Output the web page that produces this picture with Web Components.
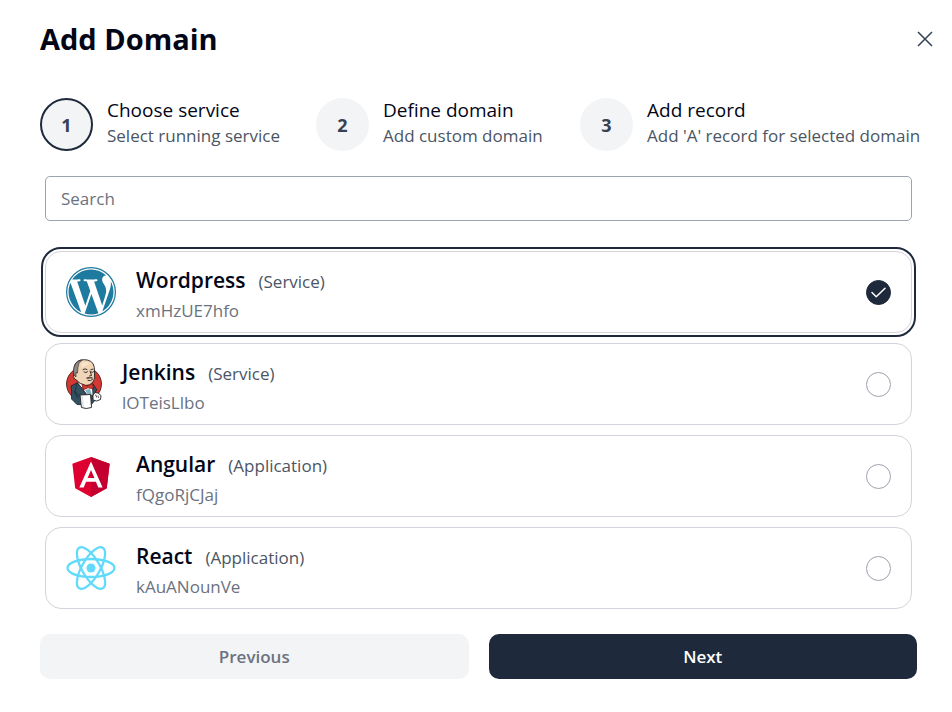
<!DOCTYPE html>
<html lang="en">
<head>
<meta charset="utf-8">
<title>Add Domain</title>
<style>
  body {
    margin: 0;
    background: #fff;
    color: #020617;
    font-family: "Open Sans", "Noto Sans", sans-serif;
    font-size: 17px;
    line-height: 24px;
  }
  svg { display: block; }
</style>
</head>
<body>
<domain-dialog heading="Add Domain">
  <step-list slot="steps">
    <step-item number="1" active><span>Choose service</span><span slot="hint">Select running service</span></step-item>
    <step-item number="2"><span>Define domain</span><span slot="hint">Add custom domain</span></step-item>
    <step-item number="3"><span>Add record</span><span slot="hint">Add 'A' record for selected domain</span></step-item>
  </step-list>
  <search-field placeholder="Search"></search-field>
  <service-list>
    <service-card checked kind="Service" code="xmHzUE7hfo">Wordpress
      <svg slot="logo" width="50" height="50" viewBox="0 0 24 24" aria-hidden="true">
        <circle cx="12" cy="12" r="11.7" fill="#fff" stroke="#1f7a9f" stroke-width=".6"/>
        <path fill="#1f7a9f" d="M21.469 6.825c.84 1.537 1.318 3.3 1.318 5.175 0 3.979-2.156 7.456-5.363 9.325l3.295-9.527c.615-1.54.82-2.771.82-3.864 0-.405-.026-.78-.07-1.11m-7.981.105c.647-.03 1.232-.105 1.232-.105.582-.075.514-.93-.067-.899 0 0-1.755.135-2.88.135-1.064 0-2.85-.15-2.85-.15-.585-.03-.661.855-.075.885 0 0 .54.061 1.125.09l1.68 4.605-2.37 7.08L5.354 6.9c.649-.03 1.234-.1 1.234-.1.585-.075.516-.93-.065-.896 0 0-1.746.138-2.874.138-.2 0-.438-.008-.69-.015C4.911 3.15 8.235 1.215 12 1.215c2.809 0 5.365 1.072 7.286 2.833-.046-.003-.091-.009-.141-.009-1.06 0-1.812.923-1.812 1.914 0 .89.513 1.643 1.06 2.531.411.72.89 1.643.89 2.977 0 .915-.354 1.994-.821 3.479l-1.075 3.585-3.9-11.61zM12 22.784c-1.059 0-2.081-.153-3.048-.437l3.237-9.406 3.315 9.087c.024.053.05.101.078.149-1.12.393-2.325.607-3.582.607M1.211 12c0-1.564.336-3.05.935-4.39L7.29 21.709C3.694 19.96 1.212 16.271 1.211 12"/>
      </svg>
    </service-card>
    <service-card kind="Service" code="lOTeisLlbo">Jenkins
      <svg slot="logo" width="36" height="50" viewBox="0 0 36 50" aria-hidden="true">
        <ellipse cx="18" cy="25" rx="17.5" ry="17" fill="#d33833" stroke="#3a1512" stroke-width=".8"/>
        <path fill="#335061" stroke="#16232c" stroke-width=".8" d="M11 24 5 27Q6 32 5.500 40L11 45.500 25 46 30 40 29 33 31 31 27 25 19 27z"/>
        <path fill="#f0d6b7" stroke="#231f20" stroke-width=".9" d="M8 10Q8 3 14.500 1 23 -.5 27 4.500 29 8 28.500 14 29.500 20 27 23 24 27 19 26.500 13 25 10.500 21L8.500 20Q6.500 17 8 15z"/>
        <path fill="#8f8a85" stroke="#231f20" stroke-width=".6" d="M8 16Q6.500 11 8.500 7 11 1.500 16 1.200 12 4 12 8L11.500 14 10 13.500 10 18z"/>
        <path fill="#f7e4cd" d="M15 4.500Q20 1.500 24 4.500 20 5.500 16 9z"/>
        <path fill="none" stroke="#231f20" stroke-width=".9" stroke-linecap="round" d="M17 10.500Q19 9 21 10.500M25 10.500 27 10.200M18 13Q20 14.500 21.500 12.800M25 13Q26.500 14 27.500 12.800M24 12 25.500 16.500 23.500 17M22 21.500Q24.500 22.500 26.500 20.500"/>
        <path fill="#53463f" d="M20 19Q22 17.300 24 18.200 26.500 17.300 27.500 19.500 24 19.500 23.500 19.500 21.500 20.500 20 19z"/>
        <path fill="#fff" stroke="#231f20" stroke-width=".6" d="M11 23 18 26 24 28 26 26 27 36 22 37z"/>
        <path fill="#81b0c4" d="M19 31 24 30 26 36 22 36z"/>
        <path fill="#335061" stroke="#16232c" stroke-width=".6" d="M11 24 16 29 21 37 14 37 9 33z"/>
        <path fill="#d33833" stroke="#6b1513" stroke-width=".7" d="M16 25 21 27 26.500 24.500 27.500 30 22 28.800 17 31z"/>
        <path fill="none" stroke="#16232c" stroke-width=".8" d="M8 32 12 39"/>
        <path fill="#fff" stroke="#231f20" stroke-width=".9" d="M14 36 24.500 35.500 25.500 48.500Q20 50.500 15.500 48.500z"/>
        <path fill="#dfe5e8" d="M15 37 17 37 18 48 16 48z"/>
        <path fill="#fff" stroke="#231f20" stroke-width=".9" d="M27 36 29 33.500 32 34 35 36.500 34.500 40.500 30.500 42 27 41z"/>
        <path fill="none" stroke="#231f20" stroke-width=".7" d="M29 36Q31 36 30.500 38.500M32 36.500 32.500 39"/>
      </svg>
    </service-card>
    <service-card kind="Application" code="fQgoRjCJaj">Angular
      <svg slot="logo" width="50" height="50" viewBox="0 0 250 250" aria-hidden="true">
        <path fill="#dd0031" d="M125 30 31.900 63.200 46.100 186.300 125 230 203.900 186.300 218.100 63.200z"/>
        <path fill="#c3002f" d="M125 30V230L203.900 186.300 218.100 63.200z"/>
        <path fill="#fff" d="M125 52.100 66.800 182.600H88.500L100.200 153.400H149.600L161.300 182.600H183zM142 135.400H108L125 94.500z"/>
      </svg>
    </service-card>
    <service-card kind="Application" code="kAuANounVe">React
      <svg slot="logo" width="50" height="50" viewBox="0 0 50 50" aria-hidden="true">
        <circle cx="25" cy="25" r="4.500" fill="#61dafb"/>
        <g fill="none" stroke="#61dafb" stroke-width="2.300">
          <ellipse cx="25" cy="25" rx="23.500" ry="9"/>
          <ellipse cx="25" cy="25" rx="23.500" ry="9" transform="rotate(60 25 25)"/>
          <ellipse cx="25" cy="25" rx="23.500" ry="9" transform="rotate(120 25 25)"/>
        </g>
      </svg>
    </service-card>
  </service-list>
  <action-button slot="actions" disabled>Previous</action-button>
  <action-button slot="actions">Next</action-button>
</domain-dialog>

<script>
class BaseElement extends HTMLElement {
  constructor() {
    super();
    this.attachShadow({ mode: 'open' });
  }
  connectedCallback() {
    if (!this.shadowRoot.firstChild) {
      this.shadowRoot.innerHTML = '<style>*{box-sizing:border-box}</style>' + this.render();
      this.ready();
    }
  }
  ready() {}
}

customElements.define('domain-dialog', class extends BaseElement {
  render() {
    return `<style>
      :host { display: block; padding: 19px 35px 32px 40px; }
      header { display: flex; justify-content: space-between; align-items: center; margin: 0 -21px 38px 0; }
      h1 { margin: 0; font-size: 29px; line-height: 40px; font-weight: 700; }
      .close { display: grid; place-items: center; width: 26px; height: 36px; padding: 0; border: 0; background: none; color: #334155; cursor: pointer; }
      main { display: flex; flex-direction: column; gap: 25px; padding: 0 5px; }
      main ::slotted(search-field) { margin-bottom: 5px; }
      .steps { margin-bottom: 24px; }
      footer { display: grid; grid-template-columns: 1fr 1fr; gap: 20px; margin-top: 25px; }
    </style>
    <section role="dialog" aria-labelledby="t">
      <header><h1 id="t">${this.getAttribute('heading')}</h1>
        <button class="close" type="button" aria-label="Close"><svg width="16" height="16" viewBox="0 0 16 16" fill="none" stroke="currentColor" stroke-width="1.500"><path d="M1 1 15 15M15 1 1 15"/></svg></button>
      </header>
      <div class="steps"><slot name="steps"></slot></div>
      <main><slot></slot></main>
      <footer><slot name="actions"></slot></footer>
    </section>`;
  }
});

customElements.define('step-list', class extends BaseElement {
  render() {
    return `<style>
      :host { display: grid; grid-template-columns: minmax(0, 236fr) minmax(0, 224fr) minmax(0, 337fr); gap: 40px; }
    </style><slot></slot>`;
  }
});

customElements.define('step-item', class extends BaseElement {
  render() {
    return `<style>
      :host { display: flex; align-items: center; gap: 14px; white-space: nowrap; }
      .num { flex: none; display: grid; place-items: center; width: 53px; height: 53px; border-radius: 50%; background: #f3f4f6; color: #374151; font-weight: 700; font-size: 18px; border: 2px solid #f3f4f6; }
      :host([active]) .num { border-color: #1e293b; }
      .text { padding-bottom: 4px; }
      .label { font-size: 19px; line-height: 26px; }
      .hint { color: #4b5563; font-size: 17px; line-height: 25px; }
    </style>
    <div class="num">${this.getAttribute('number')}</div>
    <div class="text"><div class="label"><slot></slot></div><div class="hint"><slot name="hint"></slot></div></div>`;
  }
});

customElements.define('search-field', class extends BaseElement {
  render() {
    const p = this.getAttribute('placeholder');
    return `<style>
      :host { display: block; }
      input { display: block; width: 100%; height: 45px; padding: 0 15px; border: 1px solid #9ca3af; border-radius: 5px; background: #fff; color: inherit; font: inherit; }
      input::placeholder { color: #6b7280; opacity: 1; }
    </style><input type="search" aria-label="${p}" placeholder="${p}">`;
  }
});

customElements.define('service-list', class extends BaseElement {
  render() {
    return `<style>:host { display: flex; flex-direction: column; gap: 10px; }</style><slot></slot>`;
  }
  ready() {
    this.setAttribute('role', 'radiogroup');
    this.addEventListener('pick', e => {
      for (const card of this.querySelectorAll('service-card')) {
        card.toggleAttribute('checked', card === e.target);
        card.shadowRoot.querySelector('input').checked = card === e.target;
      }
    });
  }
});

customElements.define('service-card', class extends BaseElement {
  render() {
    return `<style>
      :host { display: block; border: 1px solid #d1d5db; border-radius: 16px; }
      :host([checked]) { outline: 2px solid #1e293b; outline-offset: 2px; }
      label { display: flex; align-items: center; gap: 20px; height: 80px; padding: 0 20px; cursor: pointer; }
      .text { flex: 1; min-width: 0; padding-top: 6px; }
      .top { display: flex; align-items: baseline; gap: 13px; line-height: 30px; }
      .name { font-size: 21px; font-weight: 600; }
      .kind { color: #4b5563; }
      .code { color: #6b7280; line-height: 28px; }
      .pick { display: grid; place-items: center; }
      .pick > * { grid-area: 1 / 1; }
      input { appearance: none; width: 25px; height: 25px; margin: 0; border: 1px solid #9ca3af; border-radius: 50%; background: #fff; }
      input:checked { border-color: #1e293b; background: #1e293b; }
      .tick { display: none; pointer-events: none; }
      input:checked + .tick { display: block; }
    </style>
    <label>
      <slot name="logo"></slot>
      <div class="text">
        <div class="top"><span class="name"><slot></slot></span><span class="kind">(${this.getAttribute('kind')})</span></div>
        <div class="code">${this.getAttribute('code')}</div>
      </div>
      <span class="pick">
        <input type="radio" ${this.hasAttribute('checked') ? 'checked' : ''}>
        <svg class="tick" width="15" height="11" viewBox="0 0 15 11" fill="none" stroke="#fff" stroke-width="1.500" stroke-linecap="round" stroke-linejoin="round"><path d="M1 5.500 5.200 9.700 14 1.200"/></svg>
      </span>
    </label>`;
  }
  ready() {
    this.shadowRoot.querySelector('input').addEventListener('change', () =>
      this.dispatchEvent(new CustomEvent('pick', { bubbles: true })));
  }
});

customElements.define('action-button', class extends BaseElement {
  render() {
    return `<style>
      :host { display: block; }
      button { display: block; width: 100%; height: 45px; padding: 0; border: 0; border-radius: 10px; background: #1e293b; color: #fff; font: inherit; font-weight: 600; cursor: pointer; }
      button:disabled { background: #f3f4f6; color: #6b7280; cursor: default; }
    </style><button type="button" ${this.hasAttribute('disabled') ? 'disabled' : ''}><slot></slot></button>`;
  }
});
</script>
</body>
</html>
